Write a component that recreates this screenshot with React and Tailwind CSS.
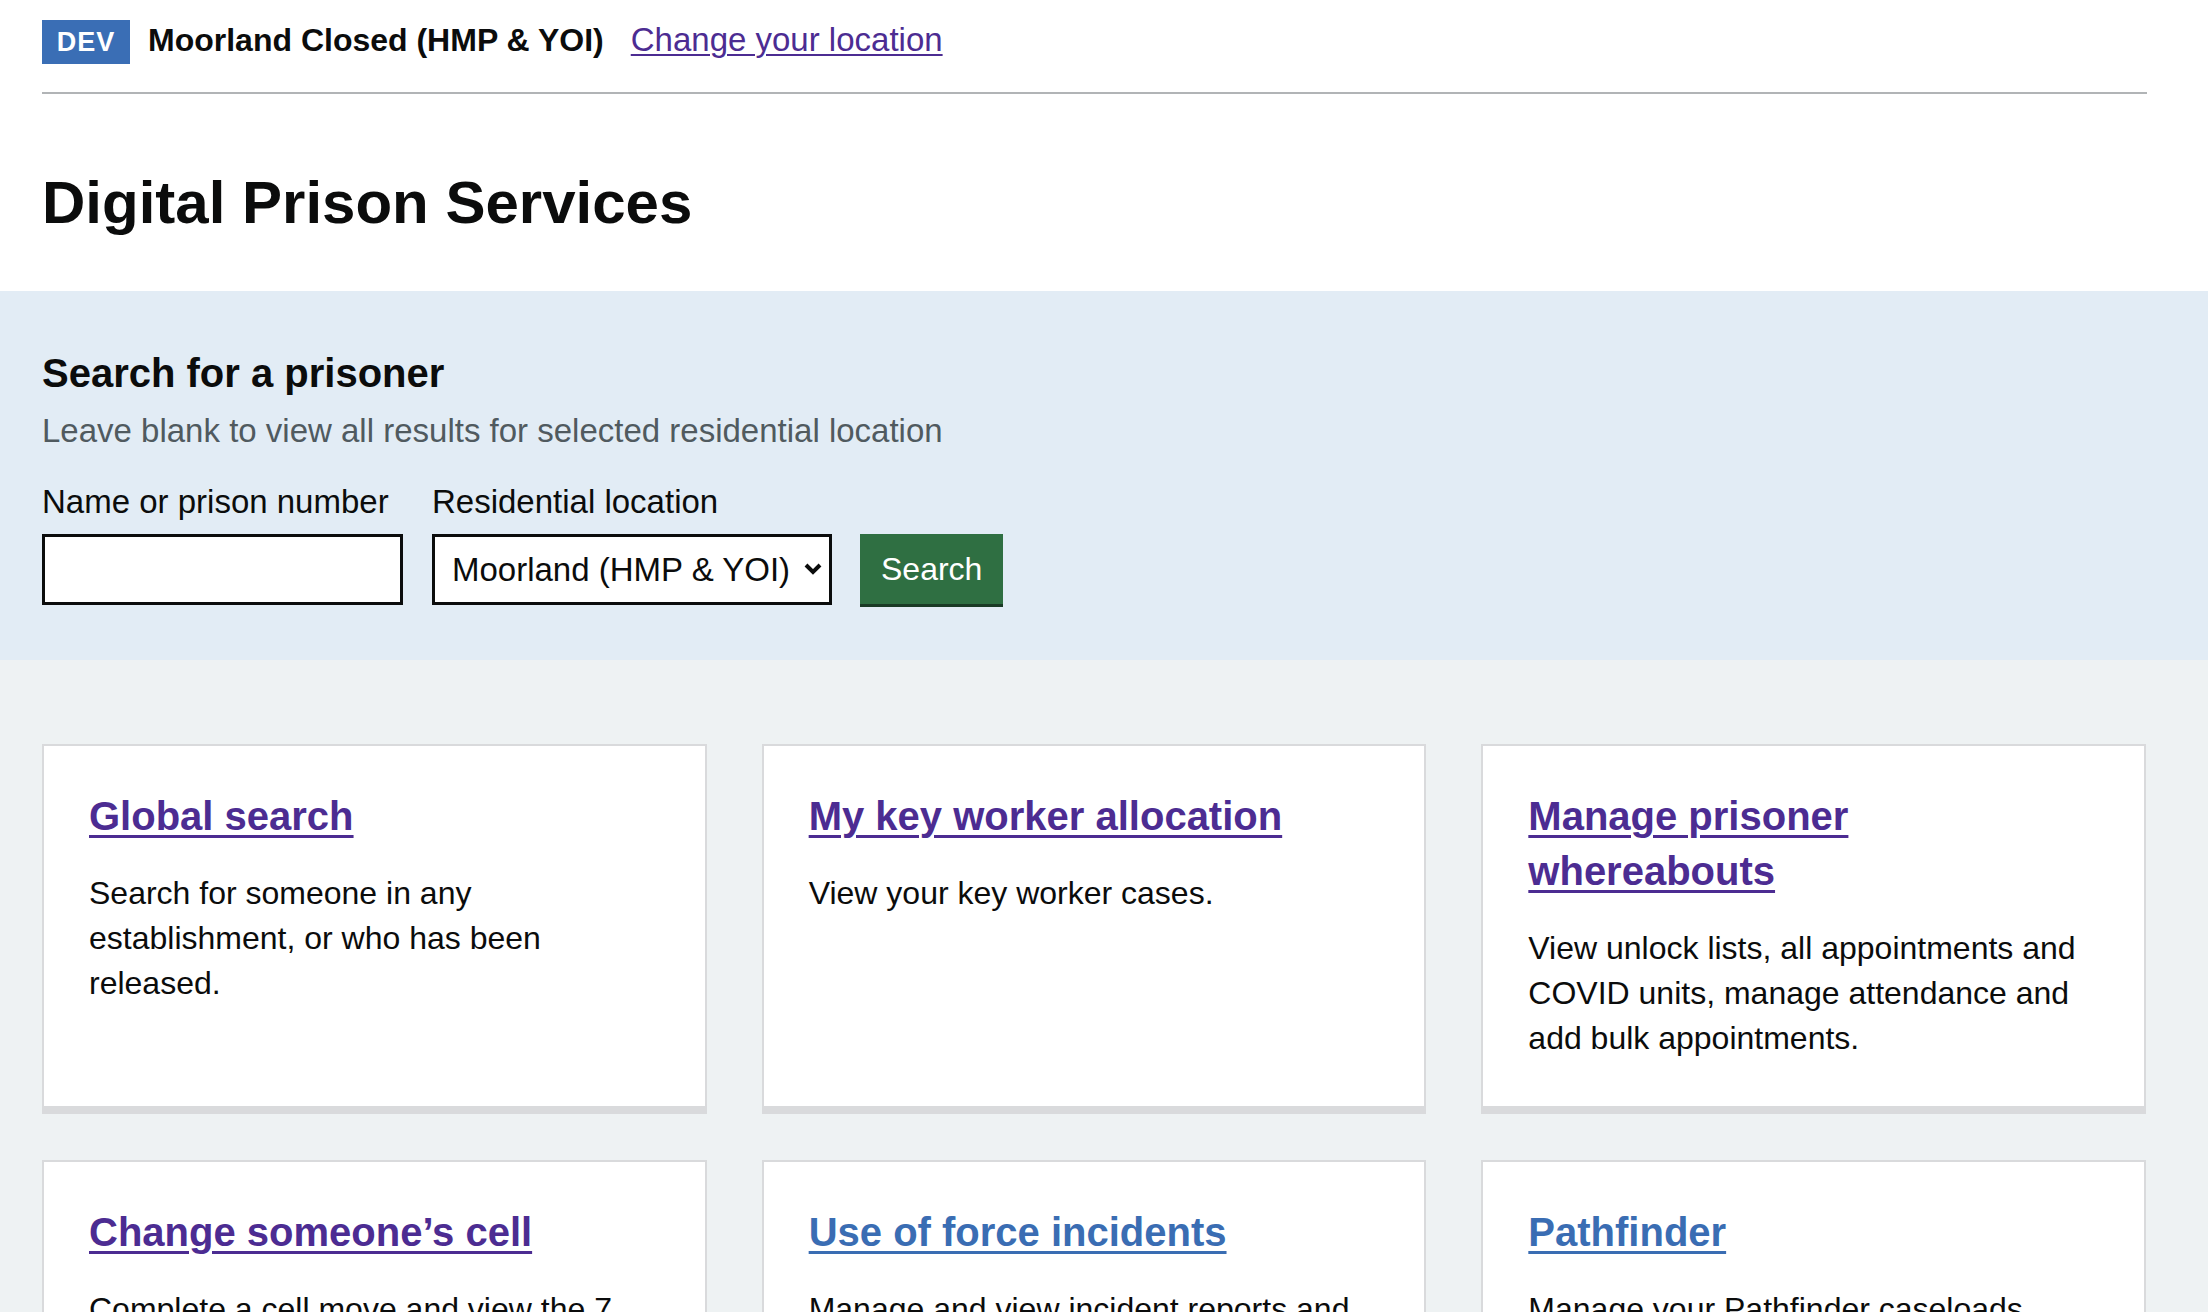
import React from 'react';

const tiles = [
  {
    title: 'Global search',
    body: 'Search for someone in any establishment, or who has been released.',
    visited: true,
  },
  { title: 'My key worker allocation', body: 'View your key worker cases.', visited: true },
  {
    title: 'Manage prisoner whereabouts',
    body: 'View unlock lists, all appointments and COVID units, manage attendance and add bulk appointments.',
    visited: true,
  },
  {
    title: 'Change someone’s cell',
    body: 'Complete a cell move and view the 7 day history of all cell moves completed in your establishment.',
    visited: true,
  },
  {
    title: 'Use of force incidents',
    body: 'Manage and view incident reports and statements.',
    visited: false,
  },
  { title: 'Pathfinder', body: 'Manage your Pathfinder caseloads.', visited: false },
];

const Tile = ({ title, body, visited }) => (
  <div className="bg-white border-2 border-b-8 border-[#d9dadc] px-[45px] pt-[43px] pb-[45px]">
    <h2 className="text-[40px] leading-[55px] font-bold">
      <a
        href="#"
        className={
          'underline decoration-[3px] underline-offset-[5px] ' +
          (visited ? 'text-[#4c2c92]' : 'text-[#3a6db3]')
        }
      >
        {title}
      </a>
    </h2>
    <p className="mt-[27px] text-[32px] leading-[45px] text-[#0b0c0c]">{body}</p>
  </div>
);

const App = () => {
  return (
    <div className="min-h-screen bg-[#eef2f3] font-['Liberation_Sans',Arial,sans-serif] text-[#0b0c0c]">
      {/* Header */}
      <div className="bg-white">
        <div className="pl-[42px] pr-[61px]">
          <div className="flex items-center pt-[20px]">
            <span className="flex h-[44px] w-[88px] items-center justify-center bg-[#3a6eb5] text-[27px] font-bold tracking-[1px] text-white">
              DEV
            </span>
            <span className="ml-[18px] pb-[4px] text-[32px] leading-[40px] font-bold">
              Moorland Closed (HMP &amp; YOI)
            </span>
            <a
              href="#"
              className="ml-[27px] pb-[4px] text-[33px] leading-[40px] text-[#4c2c92] underline decoration-2 underline-offset-[3px]"
            >
              Change your location
            </a>
          </div>
          <div className="mt-[28px] h-[2px] bg-[#b1b4b6]" />
          <h1 className="mt-[74px] pb-[53px] text-[60px] leading-[70px] font-bold">
            Digital Prison Services
          </h1>
        </div>
      </div>

      {/* Prisoner search */}
      <div className="bg-[#e2ecf5] pl-[42px] pr-[61px] pt-[57px] pb-[55px]">
        <h2 className="text-[40px] leading-[50px] font-bold">Search for a prisoner</h2>
        <p className="mt-[10px] text-[33px] leading-[45px] text-[#505a5f]">
          Leave blank to view all results for selected residential location
        </p>
        <div className="mt-[26px] flex items-end">
          <div className="w-[361px]">
            <label className="block text-[33px] leading-[45px]">Name or prison number</label>
            <input
              type="text"
              className="mt-[10px] block h-[71px] w-full border-[3px] border-[#0b0c0c] bg-white px-[12px] text-[33px] outline-none"
            />
          </div>
          <div className="ml-[29px] w-[400px]">
            <label className="block text-[33px] leading-[45px]">Residential location</label>
            <div className="relative mt-[10px]">
              <select className="block h-[71px] w-full appearance-none rounded-none border-[3px] border-[#0b0c0c] bg-white pl-[17px] text-[33px] text-[#0b0c0c] outline-none">
                <option>Moorland (HMP &amp; YOI)</option>
              </select>
              <svg
                className="pointer-events-none absolute right-[9px] top-[28px]"
                width="20"
                height="14"
                viewBox="0 0 20 14"
              >
                <path d="M3 3 L10 10 L17 3" fill="none" stroke="#0b0c0c" strokeWidth="4" />
              </svg>
            </div>
          </div>
          <button className="mb-[1px] ml-[28px] h-[70px] bg-[#2f6f42] px-[21px] text-[32px] text-white shadow-[0_3px_0_#1a3a25]">
            Search
          </button>
        </div>
      </div>

      {/* Service tiles */}
      <main className="pl-[42px] pr-[62px] pt-[84px] pb-[60px]">
        <div className="grid grid-cols-3 gap-x-[55px] gap-y-[46px]">
          {tiles.map((t) => (
            <Tile key={t.title} {...t} />
          ))}
        </div>
      </main>
    </div>
  );
};

export default App;
